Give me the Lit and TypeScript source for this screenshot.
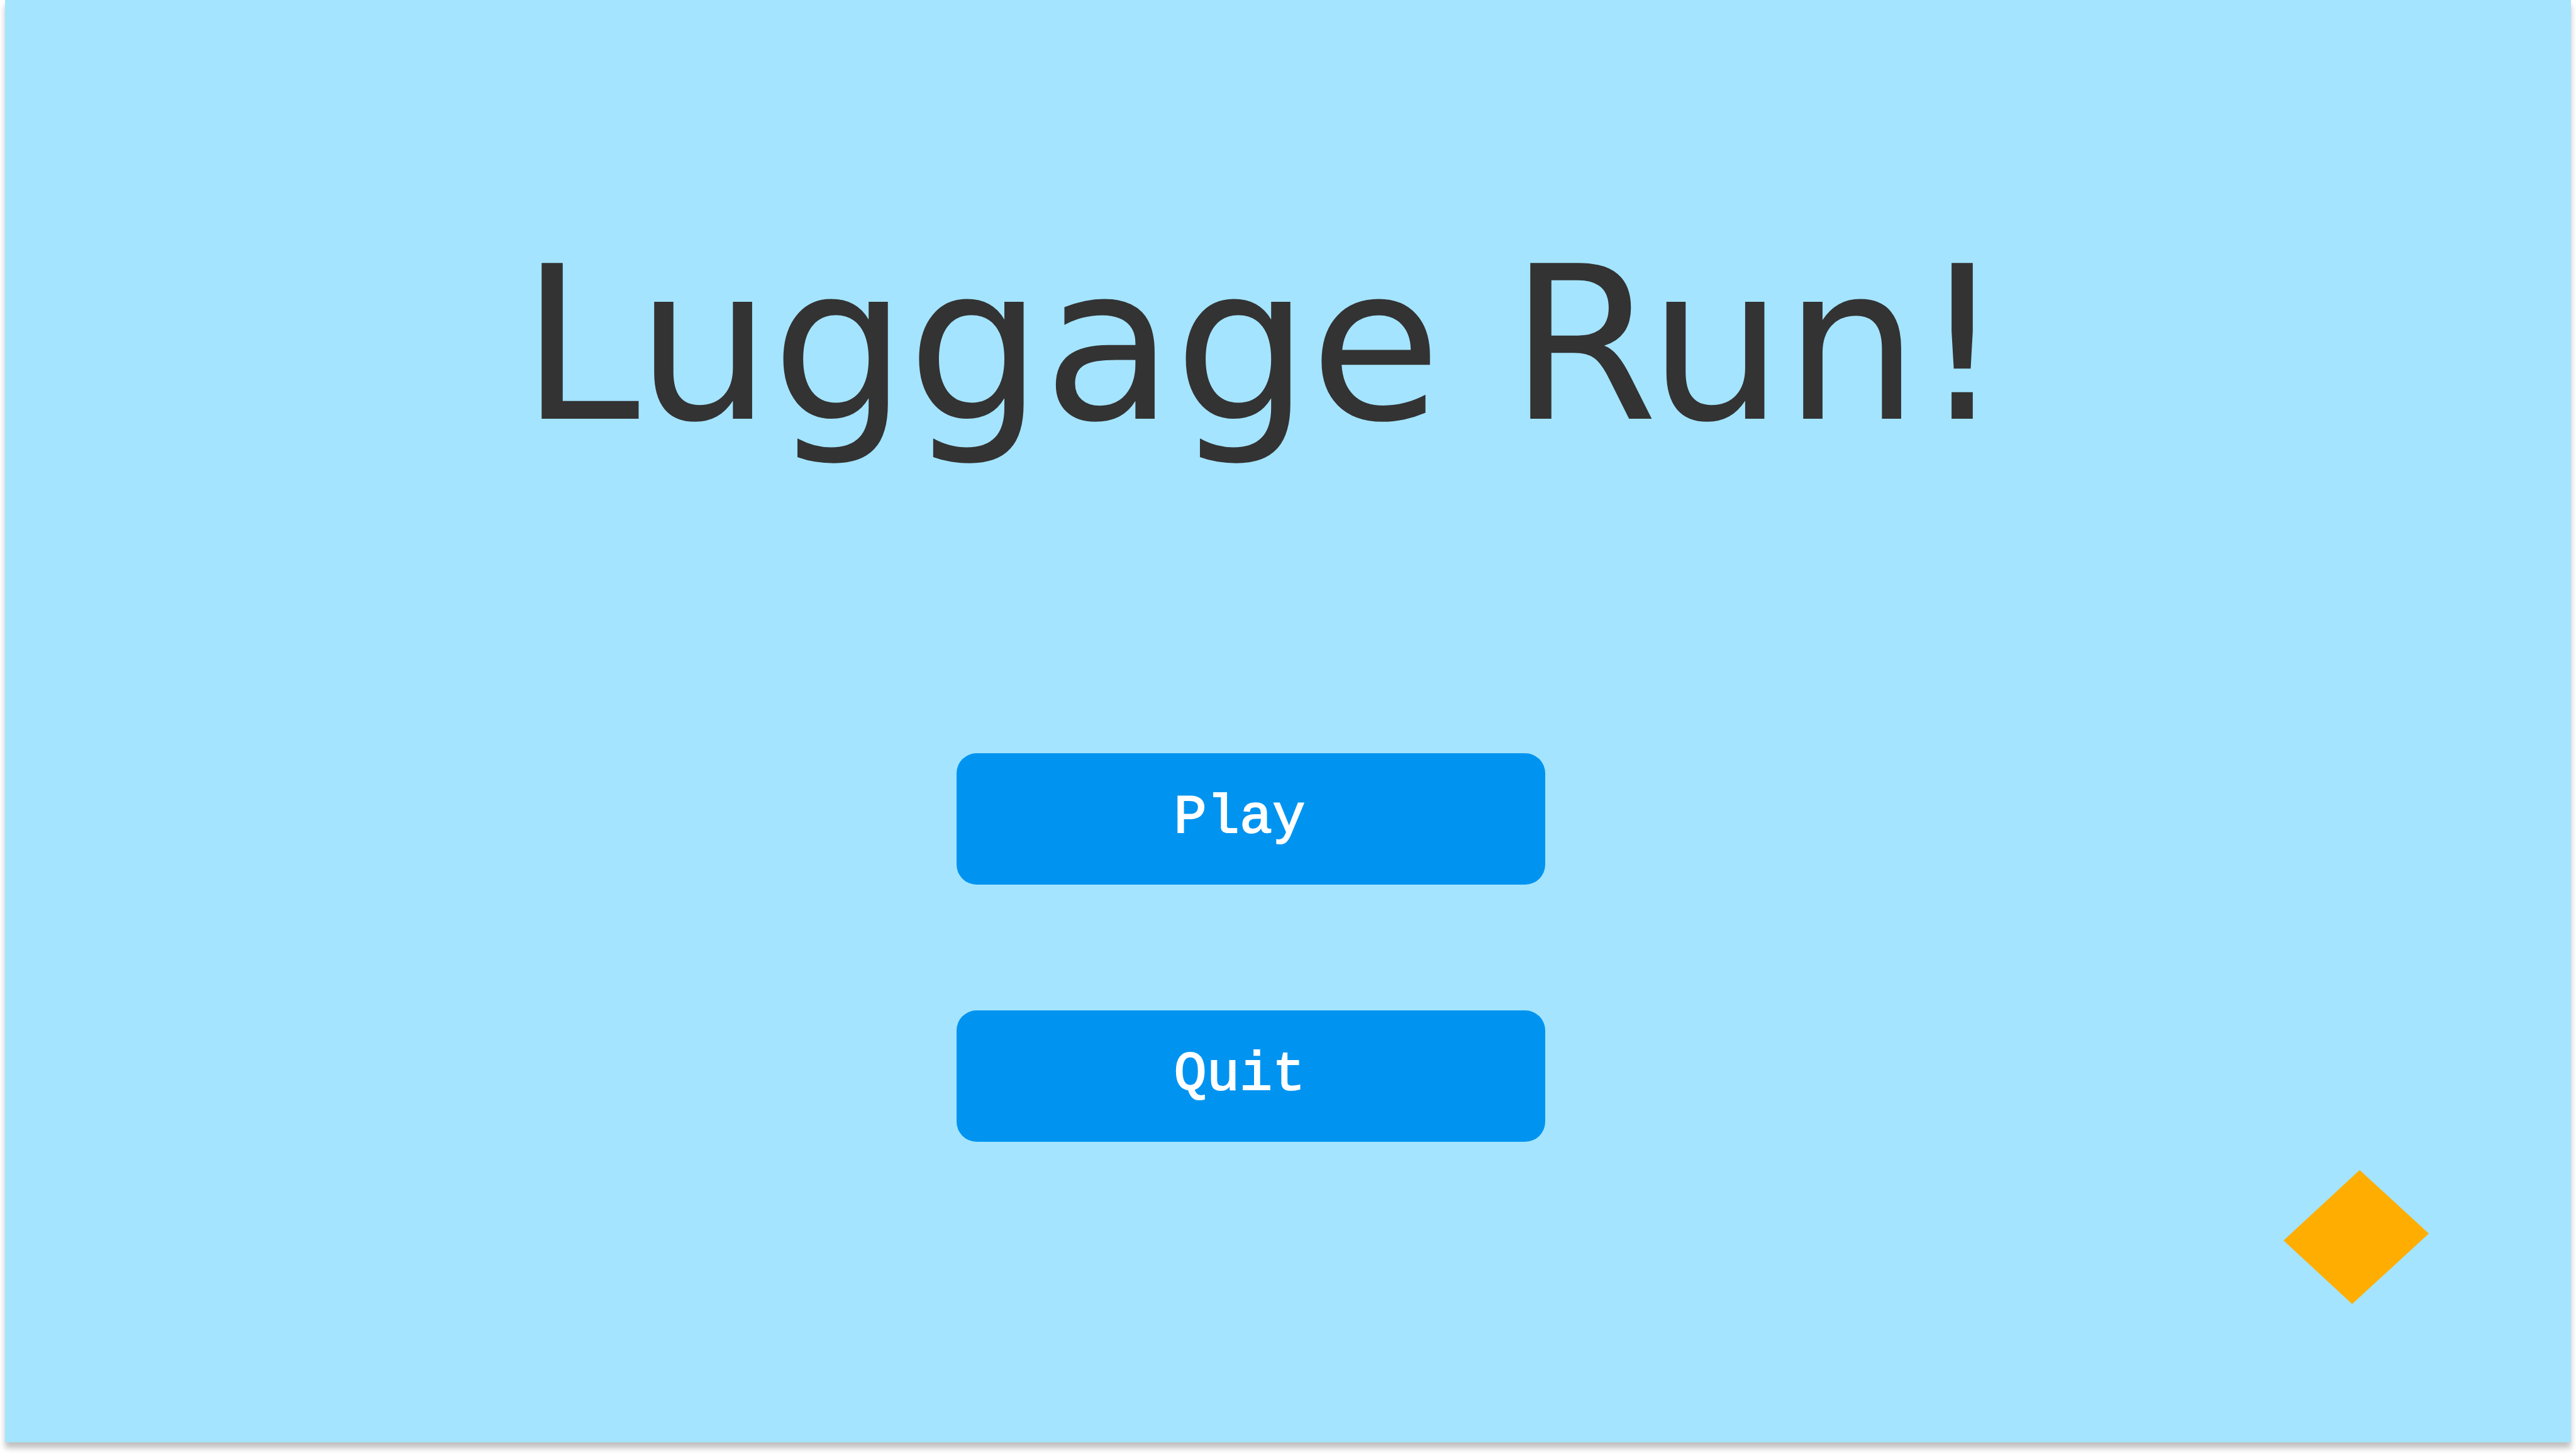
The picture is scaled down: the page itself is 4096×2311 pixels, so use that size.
import { LitElement, html, css } from "lit";
import { customElement } from "lit/decorators.js";

const MENU_ITEMS = ["Play", "Quit"];

@customElement("app-root")
export class AppRoot extends LitElement {
  static styles = css`
    :host {
      display: block;
      box-sizing: border-box;
      min-height: 100vh;
      padding: 0 8px 17px;
      background: #ffffff;
      overflow: hidden;
    }

    .screen {
      display: flex;
      flex-direction: column;
      box-sizing: border-box;
      min-height: calc(100vh - 17px);
      padding-top: 348px;
      background: #a4e4ff;
      box-shadow: 0 9px 9px rgba(0, 0, 0, 0.25);
    }

    .title {
      margin: 0;
      padding-right: 80px;
      color: #333333;
      font: 400 340px/400px "DejaVu Sans", sans-serif;
      text-align: center;
      white-space: nowrap;
    }

    .menu {
      display: flex;
      flex-direction: column;
      align-items: center;
      gap: 200px;
      margin-top: 450px;
      padding-right: 118px;
    }

    .button {
      box-sizing: border-box;
      width: 936px;
      max-width: 100%;
      min-height: 209px;
      padding: 0 36px 4px 0;
      border: 0;
      border-radius: 32px;
      background: #0094f0;
      color: #ffffff;
      font: 400 87px/100px "Liberation Mono", monospace;
      -webkit-text-stroke: 2px #ffffff;
      cursor: pointer;
    }

    .gem {
      display: block;
      align-self: flex-end;
      width: 231px;
      height: 213px;
      margin: 45px 226px 0 0;
    }
  `;

  render() {
    return html`
      <main class="screen">
        <h1 class="title">Luggage Run!</h1>
        <nav class="menu">
          ${MENU_ITEMS.map(
            (label) => html`<button class="button" type="button">${label}</button>`
          )}
        </nav>
        <svg class="gem" viewBox="0 0 231 213" aria-hidden="true">
          <polygon points="0,112 121,0 231,101 109,213" fill="#ffad00"></polygon>
        </svg>
      </main>
    `;
  }
}
